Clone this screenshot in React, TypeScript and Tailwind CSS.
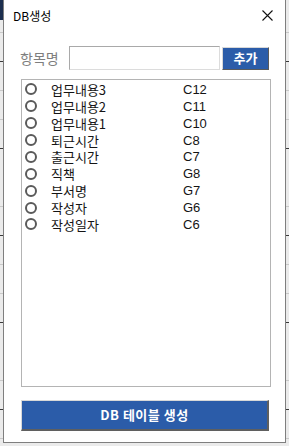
import React from 'react';

const items = [
  { name: '업무내용3', cell: 'C12' },
  { name: '업무내용2', cell: 'C11' },
  { name: '업무내용1', cell: 'C10' },
  { name: '퇴근시간', cell: 'C8' },
  { name: '출근시간', cell: 'C7' },
  { name: '직책', cell: 'G8' },
  { name: '부서명', cell: 'G7' },
  { name: '작성자', cell: 'G6' },
  { name: '작성일자', cell: 'C6' },
];

const font = { fontFamily: '"Noto Sans CJK KR", "Noto Sans", sans-serif' };

const App: React.FC = () => {
  return (
    <div
      className="w-[289px] h-[446px] relative overflow-hidden bg-[#ebebeb] bg-[repeating-linear-gradient(to_bottom,transparent_0px,transparent_32px,#c9c9c9_32px,#c9c9c9_33px,transparent_33px,transparent_61px,#3a3a3a_61px,#3a3a3a_62px,transparent_62px,transparent_90px,#c9c9c9_90px,#c9c9c9_91px,transparent_91px,transparent_119px,#c9c9c9_119px,#c9c9c9_120px,transparent_120px,transparent_148px,#3a3a3a_148px,#3a3a3a_149px,transparent_149px,transparent_174px)]"
      style={font}
    >
      {/* dark corner of the sheet behind */}
      <div className="absolute left-0 top-0 w-[3px] h-[20px] bg-[#1d2f4f]"></div>

      {/* Dialog */}
      <div className="absolute left-[3px] top-0 w-[283px] h-[443px] bg-white border border-[#7f7f7f] border-t-0 flex flex-col">
        {/* Title bar */}
        <div className="h-[32px] flex items-center justify-between pl-[9px] pr-[12px]">
          <span className="text-[12px] text-black leading-[14px]">DB생성</span>
          <svg width="11" height="11" viewBox="0 0 11 11" className="mt-[-2px]">
            <path d="M0.5 0.5 L10.5 10.5 M10.5 0.5 L0.5 10.5" stroke="#111" strokeWidth="1.1" />
          </svg>
        </div>

        {/* Input row */}
        <div className="flex items-center mt-[14px] pl-[16px] h-[24px]">
          <span className="text-[14px] text-[#7e7e7e] w-[49px] leading-[18px]">항목명</span>
          <div className="w-[151px] h-[24px] border border-[#a9a9a9] border-b-[#dcdcdc] border-r-[#dcdcdc] bg-white"></div>
          <button className="ml-[2px] w-[47px] h-[23px] bg-[#2b5ca9] text-white text-[13px] font-bold border border-t-[#d8d8d8] border-l-[#d8d8d8] border-b-[#5a5a5a] border-r-[#5a5a5a] flex items-center justify-center leading-[16px]">
            추가
          </button>
        </div>

        {/* List box */}
        <div className="ml-[17px] mt-[9px] w-[250px] h-[308px] border border-[#b4b4b4] pt-[1px]">
          {items.map((it) => (
            <div key={it.name} className="h-[16.875px] flex items-center">
              <span className="ml-[3px] w-[12px] h-[12px] rounded-full border-2 border-[#5a5a5a] bg-white"></span>
              <span className="ml-[14px] w-[132px] text-[13px] text-[#141414] leading-[15px]">{it.name}</span>
              <span className="text-[13px] text-[#141414] leading-[15px]" style={{ fontFamily: '"Liberation Sans", "Noto Sans", sans-serif' }}>{it.cell}</span>
            </div>
          ))}
        </div>

        {/* Create button */}
        <button className="ml-[17px] mt-[13px] w-[248px] h-[31px] bg-[#2b5ca9] text-white text-[13px] font-bold border border-t-[#d8d8d8] border-l-[#d8d8d8] border-b-2 border-r-2 border-b-[#5f5f5f] border-r-[#5f5f5f] flex items-center justify-center leading-[16px] tracking-[0.5px]">
          DB 테이블 생성
        </button>
      </div>
    </div>
  );
};

export default App;
